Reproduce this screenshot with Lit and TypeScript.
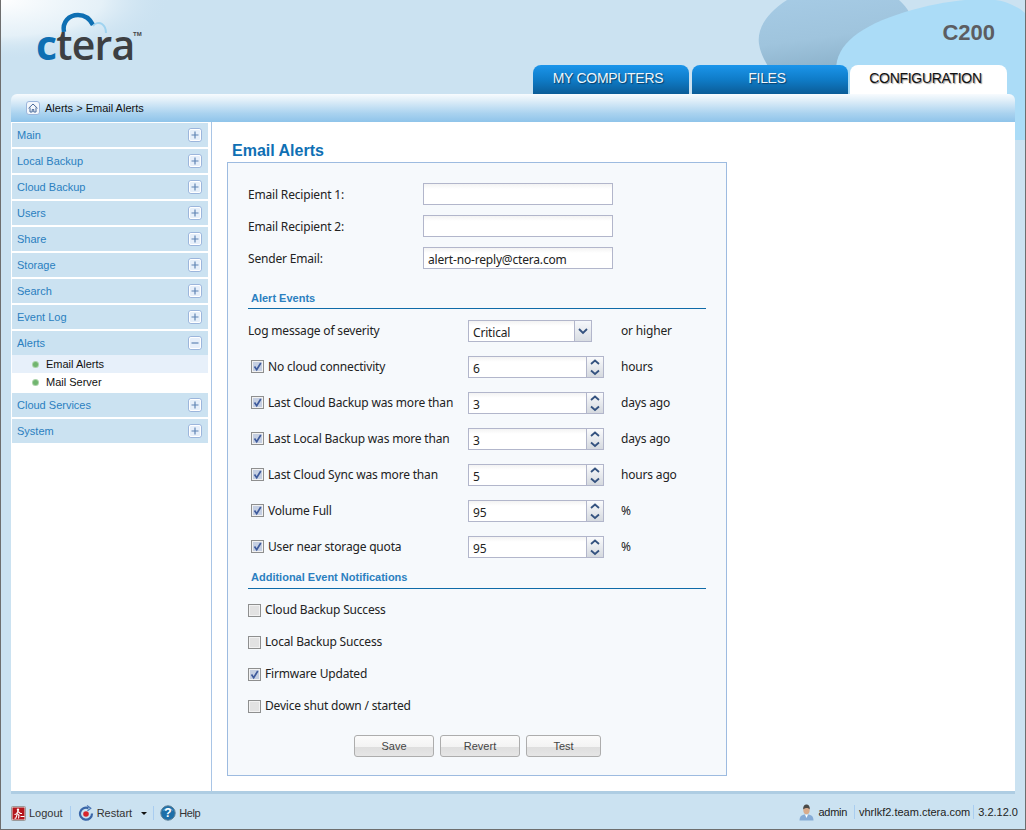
import { LitElement, html, css, svg } from "lit";
import { customElement } from "lit/decorators.js";

const menuTop = ["Main", "Local Backup", "Cloud Backup", "Users", "Share", "Storage", "Search", "Event Log"];
const menuBottom = ["Cloud Services", "System"];

const numberRows = [
  { label: "No cloud connectivity", value: "6", unit: "hours" },
  { label: "Last Cloud Backup was more than", value: "3", unit: "days ago" },
  { label: "Last Local Backup was more than", value: "3", unit: "days ago" },
  { label: "Last Cloud Sync was more than", value: "5", unit: "hours ago" },
  { label: "Volume Full", value: "95", unit: "%" },
  { label: "User near storage quota", value: "95", unit: "%" },
];

const notifications = [
  { label: "Cloud Backup Success", on: false },
  { label: "Local Backup Success", on: false },
  { label: "Firmware Updated", on: true },
  { label: "Device shut down / started", on: false },
];

@customElement("app-root")
export class AppRoot extends LitElement {
  static styles = css`
    :host {
      display: block;
      width: 1026px;
      height: 830px;
      overflow: hidden;
      font-family: "Liberation Sans", Arial, sans-serif;
      font-size: 11px;
    }
    .page {
      position: relative;
      box-sizing: border-box;
      width: 1026px;
      height: 830px;
      display: flex;
      flex-direction: column;
      overflow: hidden;
      background: #cbe2f1;
      border-left: 1px solid #6e6e6e;
      border-right: 1px solid #6e6e6e;
      border-bottom: 1px solid #6e6e6e;
    }
    .art {
      position: absolute;
      left: -1px;
      top: 0;
    }
    .header {
      position: relative;
      height: 94px;
      flex: none;
      display: flex;
      justify-content: space-between;
    }
    .logo {
      position: relative;
      margin: 12px 0 0 37px;
      width: 110px;
      height: 60px;
    }
    .logo svg {
      position: absolute;
      left: 21px;
      top: 0;
    }
    .logo-text {
      position: absolute;
      left: -2px;
      top: 2px;
      font-family: "Open Sans", sans-serif;
      font-weight: 600;
      font-size: 41px;
      line-height: 60px;
      letter-spacing: -0.8px;
      color: #3d3f42;
    }
    .logo-text b {
      font-weight: 700;
      color: #0e6fb3;
    }
    .logo-tm {
      position: absolute;
      left: 95px;
      top: 19px;
      font-size: 6px;
      font-weight: bold;
      color: #444;
    }
    .header-right {
      display: flex;
      flex-direction: column;
      align-items: flex-end;
      justify-content: space-between;
    }
    .model {
      margin: 21px 30px 0 0;
      font-size: 22px;
      line-height: 24px;
      font-weight: bold;
      color: #5c5d61;
    }
    .tabs {
      display: flex;
      gap: 3px;
      margin-right: 18px;
    }
    .tab {
      width: 156px;
      height: 29px;
      box-sizing: border-box;
      padding: 5px 6px 0 0;
      text-align: center;
      font-size: 14px;
      line-height: 16px;
      letter-spacing: -0.3px;
      color: #eef6fc;
      border-radius: 8px 8px 0 0;
      background: linear-gradient(#1b95eb, #0f7cc8 50%, #0b5c97);
      text-shadow: 1px 1px 1px #0a3f68;
    }
    .tab.active {
      width: 157px;
      margin-left: -1px;
      background: #fff;
      color: #111;
      text-shadow: 1px 1px 1px #9a9a9a;
    }
    .shell {
      position: relative;
      margin: 0 10px 0 10px;
      flex: 1;
      display: flex;
      flex-direction: column;
      min-height: 0;
    }
    .crumbs {
      height: 28px;
      flex: none;
      display: flex;
      align-items: center;
      gap: 5px;
      padding-left: 15px;
      border-radius: 6px 6px 0 0;
      background: linear-gradient(#f7fbfe, #e3f0f9 20%, #a9d2ef 70%, #8fc4ea);
      color: #111;
      font-size: 11px;
    }
    .home {
      width: 14px;
      height: 14px;
    }
    .body {
      flex: 1;
      display: flex;
      min-height: 0;
      background: #fff;
      border-bottom: 3px solid #aecde3;
    }
    .side {
      width: 201px;
      flex: none;
      box-sizing: border-box;
      border-right: 1px solid #a9c5e6;
      padding: 0 3px 0 1px;
    }
    .menu-head {
      height: 24px;
      margin: 1px 0 2px;
      box-sizing: border-box;
      display: flex;
      align-items: center;
      justify-content: space-between;
      padding: 0 6px 0 5px;
      background: #cbe2f1;
      color: #2a7fc0;
      font-size: 11px;
    }
    .menu-head + .menu-head {
      margin-top: 0;
    }
    .toggle {
      width: 14px;
      height: 14px;
      display: block;
    }
    .menu-sub {
      display: flex;
      align-items: center;
      height: 18px;
      padding-left: 21px;
      gap: 8px;
      color: #111;
      font-size: 11px;
    }
    .menu-sub.on {
      background: #e7f0fa;
    }
    .menu-subs {
      margin: -2px 0 2px;
    }
    .dot {
      width: 5px;
      height: 5px;
      border-radius: 50%;
      background: #71b56f;
      box-shadow: 0 0 0 1px #a9d2a8;
    }
    .main {
      flex: 1;
      padding: 19px 0 0 15px;
    }
    h1 {
      margin: 0 0 0 5px;
      font-size: 16px;
      line-height: 20px;
      font-weight: bold;
      color: #0f70b4;
    }
    .panel {
      box-sizing: border-box;
      width: 500px;
      height: 614px;
      margin-top: 1px;
      padding: 20px 20px 0 20px;
      border: 1px solid #9dbbe0;
      background: #f6f9fc;
      font-family: "Noto Sans", "Open Sans", sans-serif;
      font-size: 12px;
      letter-spacing: -0.18px;
      color: #222;
    }
    .email-row {
      display: flex;
      align-items: center;
      height: 22px;
      margin-bottom: 10px;
    }
    .email-row label {
      width: 175px;
    }
    input {
      box-sizing: border-box;
      height: 22px;
      margin: 0;
      padding: 2px 4px 0;
      border: 1px solid #b2b6cb;
      border-radius: 0;
      outline: none;
      background: linear-gradient(#f3f3f3, #fff 5px);
      font: inherit;
      letter-spacing: inherit;
      color: #222;
    }
    .email-row input {
      width: 190px;
    }
    h2 {
      margin: 0;
      box-sizing: border-box;
      width: 458px;
      padding-left: 3px;
      border-bottom: 1px solid #0f6ba8;
      font-family: "Liberation Sans", Arial, sans-serif;
      font-size: 11px;
      line-height: 14px;
      letter-spacing: 0;
      font-weight: bold;
      color: #2b80c0;
    }
    .first-head {
      height: 18px;
      margin-top: 22px;
      margin-bottom: 11px;
    }
    .second-head {
      height: 19px;
      margin-top: -2px;
      margin-bottom: 10px;
    }
    .ev-row {
      display: flex;
      align-items: center;
      height: 22px;
      margin-bottom: 14px;
    }
    .ev-label {
      width: 220px;
      margin-bottom: 2px;
      display: flex;
      align-items: center;
      white-space: nowrap;
    }
    .ev-label.check {
      padding-left: 3px;
      width: 217px;
      gap: 4px;
    }
    .unit {
      margin-left: 17px;
      margin-bottom: 2px;
    }
    .ev-row.sev .unit {
      margin-left: 29px;
    }
    .box {
      width: 13px;
      height: 13px;
      display: block;
      flex: none;
    }
    .select {
      box-sizing: border-box;
      display: flex;
      width: 124px;
      height: 22px;
      border: 1px solid #b2b6cb;
      background: linear-gradient(#f3f3f3, #fff 5px);
    }
    .select span {
      flex: 1;
      padding: 3px 0 0 4px;
    }
    .select i {
      width: 16px;
      border-left: 1px solid #b2b6cb;
      background: linear-gradient(#f6f8fb, #d9dde3);
      display: flex;
      align-items: center;
      justify-content: center;
    }
    .spin {
      display: flex;
      width: 136px;
      height: 22px;
    }
    .spin input {
      width: 118px;
      border-right: none;
    }
    .spin-btns {
      box-sizing: border-box;
      width: 18px;
      height: 22px;
      border: 1px solid #b2b6cb;
      display: flex;
      flex-direction: column;
      background: linear-gradient(#fafbfd, #d5d9df);
    }
    .spin-btns svg {
      display: block;
    }
    .note {
      display: flex;
      align-items: center;
      gap: 4px;
      height: 22px;
      margin-bottom: 10px;
    }
    .note span {
      margin-bottom: 2px;
    }
    .actions {
      display: flex;
      gap: 6px;
      margin: 18px 0 0 106px;
    }
    .btn {
      box-sizing: border-box;
      width: 80px;
      height: 22px;
      border: 1px solid #adadad;
      border-radius: 3px;
      text-align: center;
      font-family: "Liberation Sans", Arial, sans-serif;
      font-size: 11px;
      letter-spacing: 0;
      line-height: 20px;
      color: #444;
      background: linear-gradient(#fbfbfb, #f3f3f3 55%, #dedede 55%, #e6e6e6);
    }
    .btn.small {
      width: 75px;
    }
    .footer {
      flex: none;
      height: 35px;
      box-sizing: border-box;
      padding: 3px 7px 0 10px;
      display: flex;
      align-items: center;
      justify-content: space-between;
      color: #333;
      font-size: 11px;
    }
    .foot-group {
      display: flex;
      align-items: center;
    }
    .foot-item {
      display: flex;
      align-items: center;
      gap: 3px;
    }
    .sep {
      width: 1px;
      height: 14px;
      background: #a9cdf0;
      margin: 0 7px;
    }
    .sep.tight {
      margin: 0 6px;
    }
    .foot-right .sep {
      margin: 0 4px 0 3px;
    }
    .foot-right {
      color: #222;
      margin-top: -2px;
    }
    .admin {
      margin: 0 4px 0 2px;
      letter-spacing: -0.3px;
    }
    .help {
      letter-spacing: -0.4px;
    }
    .caret {
      width: 0;
      height: 0;
      margin-left: 6px;
      border: 3px solid transparent;
      border-top: 3px solid #111;
      border-bottom: none;
    }
  `;

  headerArt() {
    return html`<svg class="art" width="1026" height="140" viewBox="0 0 1026 140">
      <defs>
        <radialGradient id="glow" cx="0" cy="0" r="1" gradientUnits="userSpaceOnUse" gradientTransform="translate(0 0) scale(170 60)">
          <stop offset="0" stop-color="#fff" />
          <stop offset="0.6" stop-color="#f0f7fb" stop-opacity="0.7" />
          <stop offset="1" stop-color="#cbe2f1" stop-opacity="0" />
        </radialGradient>
        <linearGradient id="blob" x1="0" y1="0" x2="0.3" y2="1">
          <stop offset="0" stop-color="#a6cbe5" />
          <stop offset="0.6" stop-color="#9fc4dd" />
          <stop offset="1" stop-color="#8db3cc" />
        </linearGradient>
      </defs>
      <rect width="170" height="60" fill="url(#glow)" />
      <path d="M787 0 C765 14 757 30 759 44 C761 56 766 62 770 70 H836 L915 36 C916 20 908 8 899 0 Z" fill="url(#blob)" />
      <path d="M836 70 C836 44 860 26 905 12 C945 0 985 -4 1005 2 C1016 6 1022 10 1026 14 V140 H836 Z" fill="#abdcf7" />
    </svg>`;
  }

  plus(open: boolean) {
    return html`<svg class="toggle" viewBox="0 0 14 14">
      <rect x="0.5" y="0.5" width="13" height="13" rx="2.5" fill="#e6effa" stroke="#9cb6dc" />
      <rect x="1.5" y="1.5" width="11" height="11" rx="1.5" fill="none" stroke="#fff" />
      <path d=${open ? "M3.5 7H10.5" : "M3.5 7H10.5M7 3.5V10.5"} stroke="#5f84b4" stroke-width="1.2" />
    </svg>`;
  }

  check(on: boolean) {
    return html`<svg class="box" viewBox="0 0 13 13">
      <rect x="0.5" y="0.5" width="12" height="12" fill="#f2f2f2" stroke="#8e8f8f" />
      <rect x="2" y="2" width="9" height="9" fill=${on ? "#c5cfe2" : "#e2e2e2"} />
      ${on ? svg`<path d="M3.5 6.5L5.7 9.7L9.8 3" fill="none" stroke="#3f5b9c" stroke-width="1.7" />` : ""}
    </svg>`;
  }

  spinner() {
    return html`<span class="spin-btns">
      <svg width="16" height="10" viewBox="0 0 16 10"><path d="M4 7L8 3.5L12 7" fill="none" stroke="#34527f" stroke-width="1.8" /></svg>
      <svg width="16" height="10" viewBox="0 0 16 10"><path d="M4 3.5L8 7L12 3.5" fill="none" stroke="#34527f" stroke-width="1.8" /></svg>
    </span>`;
  }

  logoutIcon() {
    return html`<svg width="15" height="15" viewBox="0 0 15 15">
      <rect x="0.5" y="0.5" width="14" height="14" rx="1" fill="#e8e4e4" stroke="#9a9a9a" />
      <rect x="1.5" y="1.5" width="12" height="12" fill="#b3161c" />
      <circle cx="7" cy="3.7" r="1.2" fill="#fff" />
      <path d="M7 5L5.5 8L3.5 8.5M6 7.5L8 9.3L7.5 12.5M6 9L4.8 12.3H3.5M7 5.5L9.3 7.5H11M9.5 10.5H13.5" fill="none" stroke="#fff" stroke-width="1.1" />
    </svg>`;
  }

  restartIcon() {
    return html`<svg width="16" height="16" viewBox="0 0 16 16">
      <path d="M10.5 3.2A6 6 0 1 0 14 8.5" fill="none" stroke="#3a66a8" stroke-width="2.2" />
      <path d="M9 0.5L12.8 3.2L9.5 5.8" fill="none" stroke="#4a76b5" stroke-width="1.2" />
      <circle cx="8" cy="9" r="2.8" fill="#d8262c" />
    </svg>`;
  }

  helpIcon() {
    return html`<svg width="16" height="16" viewBox="0 0 16 16">
      <circle cx="8" cy="8" r="7.2" fill="#1d6fa9" stroke="#5d7f96" />
      <path d="M2.5 6A6 5 0 0 1 13.5 6Q8 3.5 2.5 6Z" fill="#5fa6d3" />
      <text x="8" y="12.3" text-anchor="middle" font-size="12" font-weight="bold" font-family="Liberation Sans" fill="#fff">?</text>
    </svg>`;
  }

  userIcon() {
    return html`<svg width="15" height="17" viewBox="0 0 15 17">
      <path d="M0.5 16.5C0.5 12 3 10.5 7.5 10.5S14.5 12 14.5 16.5Z" fill="#86abd6" />
      <path d="M6 10.5L7.5 14L9 10.5Z" fill="#fff" />
      <ellipse cx="7.5" cy="6" rx="3.2" ry="4.2" fill="#d8ab8c" />
      <path d="M4.2 5.5C4 1.5 6 0.5 7.5 0.5S11 1.5 10.8 5.5C9.5 3.5 6 3.5 4.2 5.5Z" fill="#4a4a48" />
    </svg>`;
  }

  render() {
    return html`<div class="page">
      ${this.headerArt()}
      <div class="header">
        <div class="logo">
          <svg width="70" height="32" viewBox="0 0 70 32">
            <path d="M5 20C3 10 10 3 19 3C26 3 31 7 34 13" fill="none" stroke="#0e6fb3" stroke-width="4.5" />
            <path d="M34 14C36 11 40 10 43 12C46 14 47 17 47 21" fill="none" stroke="#9fd3f0" stroke-width="2" />
          </svg>
          <span class="logo-text"><b>c</b>tera</span>
          <span class="logo-tm">TM</span>
        </div>
        <div class="header-right">
          <div class="model">C200</div>
          <div class="tabs">
            <div class="tab">MY COMPUTERS</div>
            <div class="tab">FILES</div>
            <div class="tab active">CONFIGURATION</div>
          </div>
        </div>
      </div>
      <div class="shell">
        <div class="crumbs">
          <svg class="home" viewBox="0 0 14 14">
            <rect x="0.5" y="0.5" width="13" height="13" rx="2.5" fill="#f3f7fc" stroke="#9cb6dc" />
            <path d="M2.5 7.3L7 3L11.5 7.3M4 6.5V11H6.2V8.5H7.8V11H10V6.5" fill="none" stroke="#4b6b9a" />
          </svg>
          <span>Alerts &gt; Email Alerts</span>
        </div>
        <div class="body">
          <nav class="side">
            ${menuTop.map((m) => html`<div class="menu-head"><span>${m}</span>${this.plus(false)}</div>`)}
            <div class="menu-head"><span>Alerts</span>${this.plus(true)}</div>
            <div class="menu-subs">
              <div class="menu-sub on"><span class="dot"></span>Email Alerts</div>
              <div class="menu-sub"><span class="dot"></span>Mail Server</div>
            </div>
            ${menuBottom.map((m) => html`<div class="menu-head"><span>${m}</span>${this.plus(false)}</div>`)}
          </nav>
          <main class="main">
            <h1>Email Alerts</h1>
            <section class="panel">
              <div class="email-row"><label>Email Recipient 1:</label><input type="text" /></div>
              <div class="email-row"><label>Email Recipient 2:</label><input type="text" /></div>
              <div class="email-row"><label>Sender Email:</label><input type="text" value="alert-no-reply@ctera.com" /></div>

              <h2 class="first-head">Alert Events</h2>
              <div class="ev-row sev">
                <div class="ev-label">Log message of severity</div>
                <div class="select">
                  <span>Critical</span>
                  <i><svg width="10" height="8" viewBox="0 0 10 8"><path d="M1 2L5 6L9 2" fill="none" stroke="#34527f" stroke-width="1.8" /></svg></i>
                </div>
                <span class="unit">or higher</span>
              </div>
              ${numberRows.map(
                (r) => html`<div class="ev-row">
                  <div class="ev-label check">${this.check(true)}<span>${r.label}</span></div>
                  <div class="spin"><input type="text" .value=${r.value} />${this.spinner()}</div>
                  <span class="unit">${r.unit}</span>
                </div>`,
              )}

              <h2 class="second-head">Additional Event Notifications</h2>
              <div>
                ${notifications.map((n) => html`<div class="note">${this.check(n.on)}<span>${n.label}</span></div>`)}
              </div>
              <div class="actions">
                <div class="btn">Save</div>
                <div class="btn">Revert</div>
                <div class="btn small">Test</div>
              </div>
            </section>
          </main>
        </div>
      </div>
      <footer class="footer">
        <div class="foot-group">
          <span class="foot-item">${this.logoutIcon()}Logout</span>
          <span class="sep"></span>
          <span class="foot-item">${this.restartIcon()}Restart<span class="caret"></span></span>
          <span class="sep tight"></span>
          <span class="foot-item">${this.helpIcon()}<span class="help">Help</span></span>
        </div>
        <div class="foot-group foot-right">
          <span class="foot-item">${this.userIcon()}<span class="admin">admin</span></span>
          <span class="sep"></span>
          <span>vhrlkf2.team.ctera.com</span>
          <span class="sep"></span>
          <span>3.2.12.0</span>
        </div>
      </footer>
    </div>`;
  }
}
